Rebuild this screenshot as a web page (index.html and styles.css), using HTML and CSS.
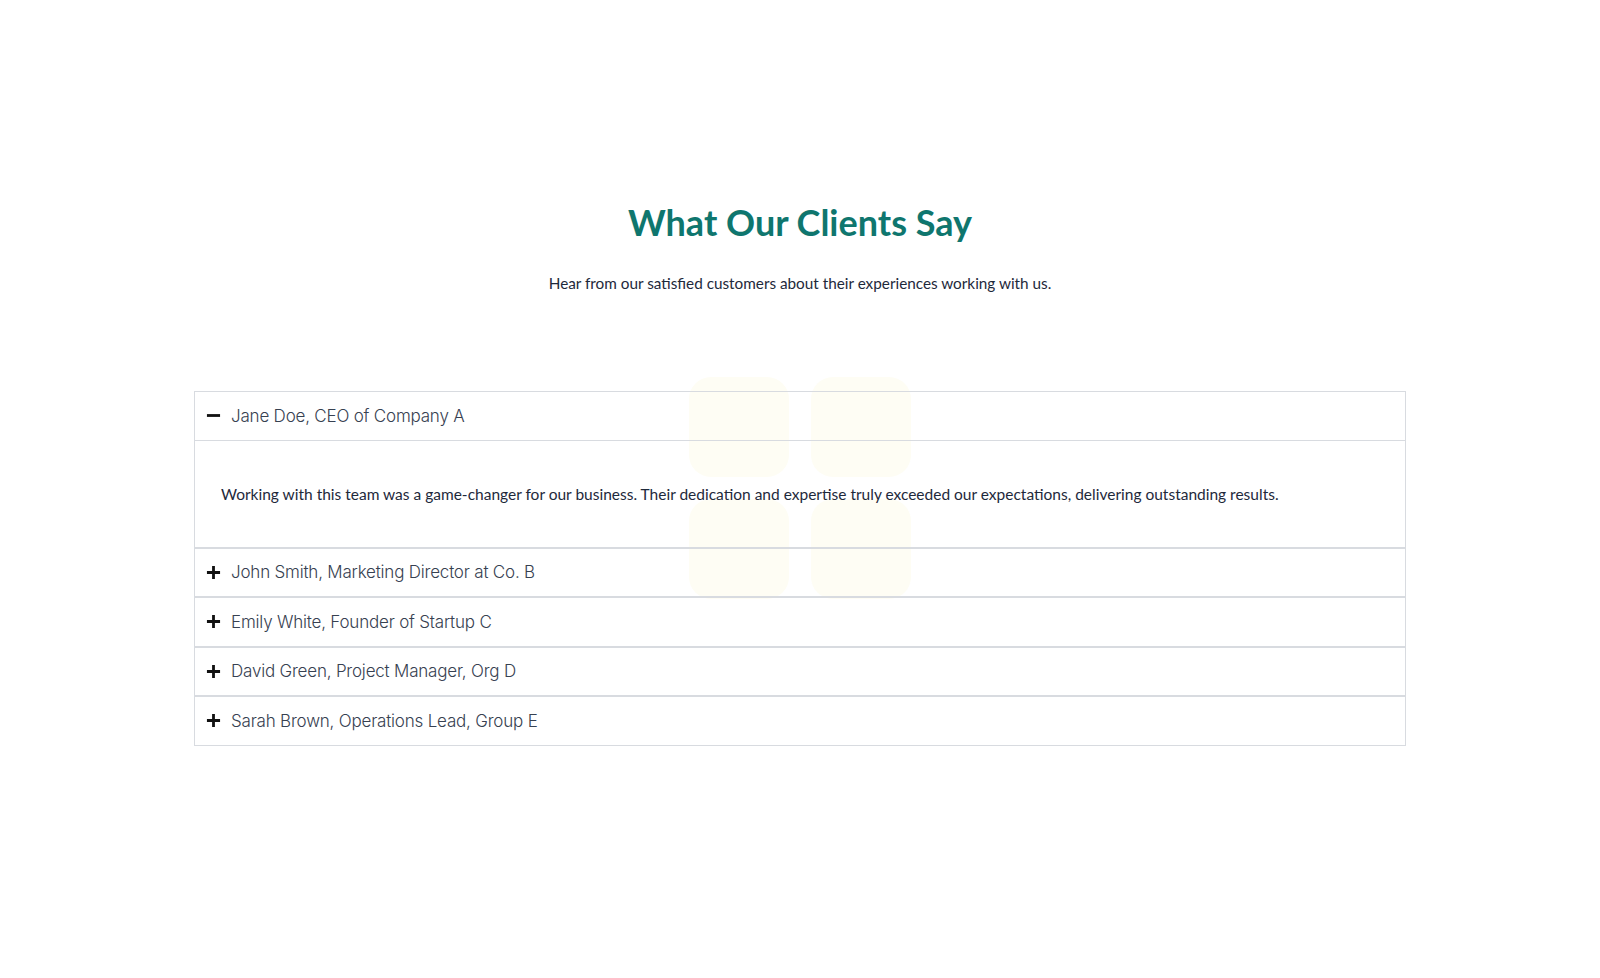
FILE: index.html
```html
<!DOCTYPE html>
<html lang="en">
<head>
    <meta charset="UTF-8">
    <meta name="viewport" content="width=device-width, initial-scale=1.0">
    <title>Testimonials</title>
    <link rel="stylesheet" href="styles.css">
</head>
<body>
    <section class="testimonials">
        <h2>What Our Clients Say</h2>
        <p class="lead">Hear from our satisfied customers about their experiences working with us.</p>

        <div class="accordion">
            <!-- soft tiles sitting behind the list -->
            <div class="tiles" aria-hidden="true">
                <span></span><span></span><span></span><span></span>
            </div>

            <div class="item open">
                <button class="head">
                    <svg class="icon" viewBox="0 0 16 16"><path d="M1 8h14"/></svg>
                    Jane Doe, CEO of Company A
                </button>
                <div class="panel">
                    <p>Working with this team was a game-changer for our business. Their dedication and expertise truly exceeded our expectations, delivering outstanding results.</p>
                </div>
            </div>
            <div class="item">
                <button class="head">
                    <svg class="icon" viewBox="0 0 16 16"><path d="M1 8h14M8 1v14"/></svg>
                    John Smith, Marketing Director at Co. B
                </button>
            </div>
            <div class="item">
                <button class="head">
                    <svg class="icon" viewBox="0 0 16 16"><path d="M1 8h14M8 1v14"/></svg>
                    Emily White, Founder of Startup C
                </button>
            </div>
            <div class="item">
                <button class="head">
                    <svg class="icon" viewBox="0 0 16 16"><path d="M1 8h14M8 1v14"/></svg>
                    David Green, Project Manager, Org D
                </button>
            </div>
            <div class="item">
                <button class="head">
                    <svg class="icon" viewBox="0 0 16 16"><path d="M1 8h14M8 1v14"/></svg>
                    Sarah Brown, Operations Lead, Group E
                </button>
            </div>
        </div>
    </section>
</body>
</html>
```

FILE: styles.css
```css
:root {
--line: 1px solid #d8dbe0;
--teal: #0f766e;
--ink: #1e293b;
}

body {
margin: 0;
background: #fff;
font-family: "Lato", "Inter", sans-serif;
color: var(--ink);
}

.testimonials {
padding: 200px 0 120px;
text-align: center;
}

.testimonials h2 {
margin: 0;
font-size: 36px;
line-height: 44px;
font-weight: 700;
color: var(--teal);
}

.lead {
margin: 27px 0 0;
font-size: 15.3px;
line-height: 24px;
}

.accordion {
position: relative;
width: 1212px;
margin: 96px auto 0;
text-align: left;
}

.tiles {
position: absolute;
left: 495px;
top: -14px;
display: grid;
grid-template-columns: 100px 100px;
gap: 22px;
z-index: -1;
}

.tiles span {
width: 100px;
height: 100px;
border-radius: 22px;
background: #fefdf4;
}

.item {
border: var(--line);
}

.head {
display: flex;
align-items: center;
gap: 10px;
width: 100%;
height: 47.5px;
padding: 0 11px;
border: 0;
background: transparent;
font-family: "Inter", sans-serif;
font-size: 17px;
font-weight: 300;
color: #374151;
letter-spacing: -0.2px;
cursor: pointer;
}

.icon {
width: 15px;
height: 15px;
fill: none;
stroke: #111;
stroke-width: 3;
}

.panel {
border-top: var(--line);
padding: 41px 26px 41px;
}

.panel p {
margin: 0;
font-size: 15.5px;
line-height: 24px;
}
```
